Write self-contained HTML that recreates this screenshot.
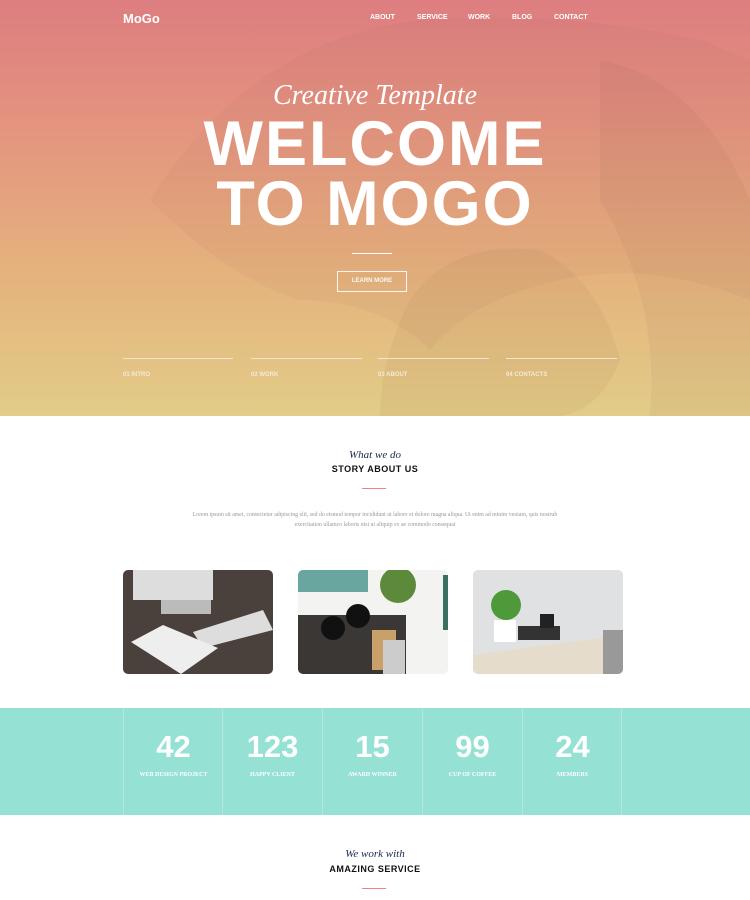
<!DOCTYPE html>
<html><head><meta charset="utf-8"><style>
*{margin:0;padding:0;box-sizing:border-box}
body{width:750px;height:900px;overflow:hidden;background:#fff;font-family:"Liberation Sans",sans-serif}
.hero{position:absolute;left:0;top:0;width:750px;height:416px;background:linear-gradient(180deg,#dd7d80 0%,#e4947f 30%,#e5b27d 65%,#e2cc88 100%);overflow:hidden}
.abs{position:absolute}
.nav a{position:absolute;top:14px;color:#fff;font-size:7px;font-weight:bold}
.script{font-family:"Liberation Serif",serif;font-style:italic}
.stat{position:absolute;top:708px;width:100px;height:107px;border-left:1px solid #b5e8dd;text-align:center;color:#fff}
.stat b{display:block;margin-top:22px;font-size:31px;line-height:34px}
.stat span{display:block;margin-top:8px;font-family:"Liberation Serif",serif;font-size:6px;font-weight:bold}
</style></head><body>
<div class="hero">
<svg class="abs" style="left:0;top:0" width="750" height="416">
<path d="M150 200 Q250 40 420 20 Q560 10 700 40 L750 60 L750 300 Q650 260 560 280 Q470 300 430 350 Q380 300 300 300 Q230 280 150 200Z" fill="#9a5a50" opacity="0.06"/>
<path d="M410 300 Q450 240 540 250 Q600 280 620 360 Q600 410 560 416 L380 416 Q380 360 410 300Z" fill="#8a6040" opacity="0.08"/>
<path d="M600 60 Q700 80 750 200 L750 416 L650 416 Q660 300 600 200Z" fill="#7a4a40" opacity="0.06"/>
</svg>
<div class="abs" style="left:123px;top:11px;color:#fff;font-weight:bold;font-size:13px">MoGo</div>
<div class="nav"><a style="left:370px">ABOUT</a><a style="left:417px">SERVICE</a><a style="left:468px">WORK</a><a style="left:512px">BLOG</a><a style="left:554px">CONTACT</a></div>
<div class="abs script" style="left:0;width:750px;top:80px;text-align:center;color:#fff;font-size:28px">Creative Template</div>
<div class="abs" style="left:0;width:750px;top:114px;text-align:center;color:#fff;font-size:63px;font-weight:bold;line-height:60px;letter-spacing:2px">WELCOME<br>TO MOGO</div>
<div class="abs" style="left:352px;top:253px;width:40px;height:1px;background:#fff"></div>
<div class="abs" style="left:337px;top:271px;width:70px;height:21px;border:1px solid #fff;color:#fff;font-size:6px;font-weight:bold;text-align:center;line-height:19px;opacity:.9">LEARN MORE</div>
<div class="abs" style="left:123px;top:358px;width:110px;height:1px;background:#f3e6d0"></div>
<div class="abs" style="left:251px;top:358px;width:111px;height:1px;background:#f3e6d0"></div>
<div class="abs" style="left:378px;top:358px;width:111px;height:1px;background:#f3e6d0"></div>
<div class="abs" style="left:506px;top:358px;width:111px;height:1px;background:#f3e6d0"></div>
<div class="abs" style="left:123px;top:372px;color:#f5ead5;font-size:6px;font-weight:bold">01 INTRO</div>
<div class="abs" style="left:251px;top:372px;color:#f5ead5;font-size:6px;font-weight:bold">02 WORK</div>
<div class="abs" style="left:378px;top:372px;color:#f5ead5;font-size:6px;font-weight:bold">03 ABOUT</div>
<div class="abs" style="left:506px;top:372px;color:#f5ead5;font-size:6px;font-weight:bold">04 CONTACTS</div>
</div>
<div class="abs script" style="left:0;width:750px;top:449px;text-align:center;font-size:11px;color:#1a2a50">What we do</div>
<div class="abs" style="left:0;width:750px;top:464px;text-align:center;font-size:9px;font-weight:bold;color:#111;letter-spacing:.5px">STORY ABOUT US</div>
<div class="abs" style="left:362px;top:488px;width:24px;height:1px;background:#f38181"></div>
<div class="abs" style="left:180px;width:390px;top:510px;text-align:center;font-family:'Liberation Serif',serif;font-size:5.8px;line-height:10px;color:#999">Lorem ipsum sit amet, consectetur adipiscing elit, sed do eismod tempor incididunt ut labore et dolore magna aliqua. Ut enim ad minim veniam, quis nostrub exercitation ullamco laboris nisi ut aliquip ex ae commodo consequat</div>
<svg class="abs" style="left:123px;top:570px" width="150" height="104"><defs><clipPath id="c1"><rect width="150" height="104" rx="5"/></clipPath></defs><g clip-path="url(#c1)"><rect width="150" height="104" fill="#4a403c"/><rect x="10" y="0" width="80" height="30" fill="#ddd"/><rect x="38" y="30" width="50" height="14" fill="#bbb"/><path d="M70 62 L140 40 L150 60 L80 78Z" fill="#ddd"/><path d="M8 72 L40 55 L95 78 L58 104 Z" fill="#eee"/></g></svg>
<svg class="abs" style="left:298px;top:570px" width="150" height="104"><defs><clipPath id="c2"><rect width="150" height="104" rx="5"/></clipPath></defs><g clip-path="url(#c2)"><rect width="150" height="104" fill="#f3f3f1"/><rect x="0" y="0" width="70" height="22" fill="#6aa6a0"/><rect x="0" y="45" width="108" height="59" fill="#3b3735"/><circle cx="35" cy="58" r="12" fill="#111"/><circle cx="60" cy="46" r="12" fill="#111"/><circle cx="100" cy="15" r="18" fill="#5c8a3a"/><rect x="145" y="5" width="5" height="55" fill="#3a7060"/><rect x="74" y="60" width="24" height="40" fill="#c9a06a"/><rect x="85" y="70" width="22" height="34" fill="#ccc"/></g></svg>
<svg class="abs" style="left:473px;top:570px" width="150" height="104"><defs><clipPath id="c3"><rect width="150" height="104" rx="5"/></clipPath></defs><g clip-path="url(#c3)"><rect width="150" height="104" fill="#dfe1e3"/><path d="M0 85 L150 65 L150 104 L0 104Z" fill="#e5dccb"/><circle cx="33" cy="35" r="15" fill="#4e9a3a"/><rect x="21" y="50" width="22" height="22" fill="#fff"/><rect x="45" y="56" width="42" height="14" fill="#333"/><rect x="67" y="44" width="14" height="14" fill="#222"/><rect x="130" y="60" width="20" height="44" fill="#999"/></g></svg>
<div class="abs" style="left:0;top:708px;width:750px;height:107px;background:#95e1d3"></div>
<div class="stat" style="left:123px"><b>42</b><span>WEB DESIGN PROJECT</span></div>
<div class="stat" style="left:222px"><b>123</b><span>HAPPY CLIENT</span></div>
<div class="stat" style="left:322px"><b>15</b><span>AWARD WINNER</span></div>
<div class="stat" style="left:422px"><b>99</b><span>CUP OF COFFEE</span></div>
<div class="stat" style="left:522px"><b>24</b><span>MEMBERS</span></div>
<div class="abs" style="left:621px;top:708px;width:1px;height:107px;background:#b5e8dd"></div>
<div class="abs script" style="left:0;width:750px;top:848px;text-align:center;font-size:11px;color:#1a2a50">We work with</div>
<div class="abs" style="left:0;width:750px;top:864px;text-align:center;font-size:9px;font-weight:bold;color:#111;letter-spacing:.5px">AMAZING SERVICE</div>
<div class="abs" style="left:362px;top:888px;width:24px;height:1px;background:#f38181"></div>
</body></html>
